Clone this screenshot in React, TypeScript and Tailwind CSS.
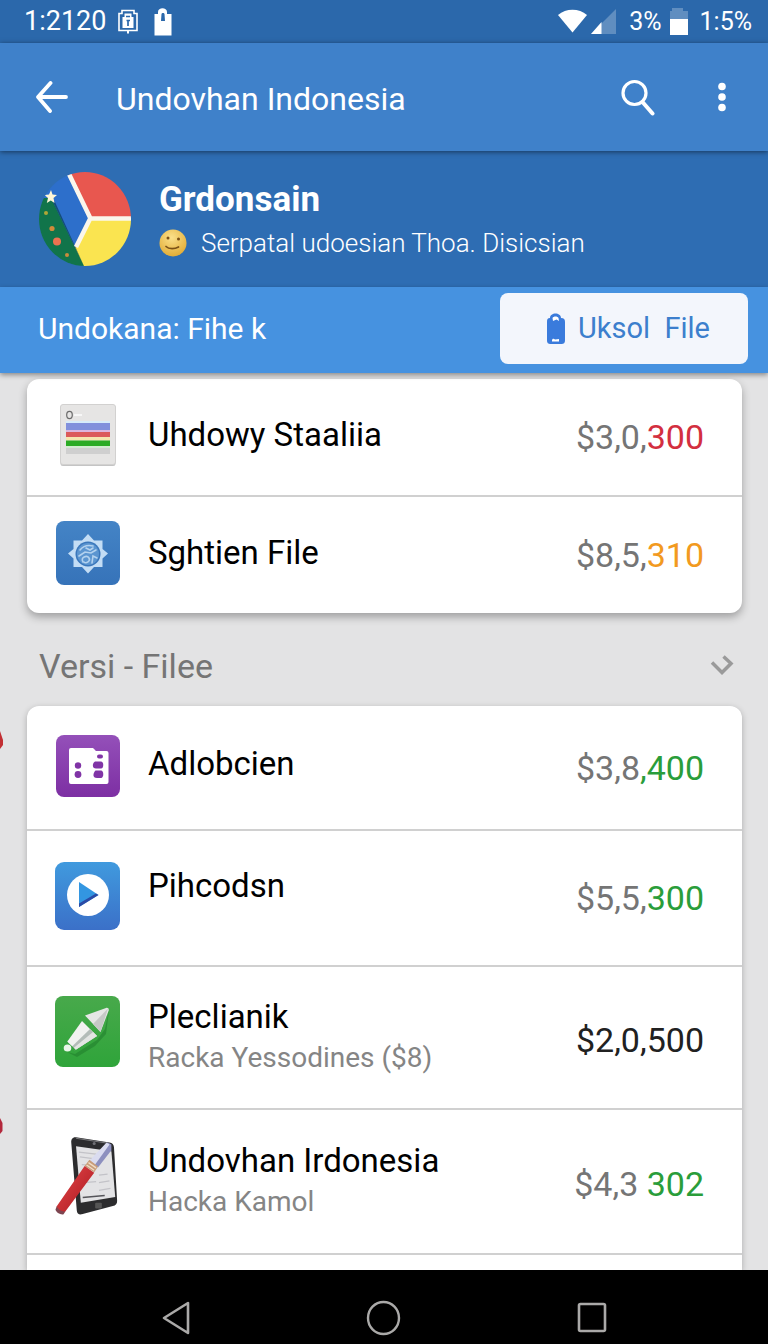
import React from 'react';
import type { ReactNode } from 'react';

type Item = {
  title: string;
  subtitle?: string;
  amount: string;
  change: string;
  tone: string;
  amountTone?: string;
  height: string;
  titleClass?: string;
  icon: ReactNode;
};

function SheetIcon() {
  return (
    <svg width="64" height="64" viewBox="0 0 64 64" aria-hidden="true">
      <rect x="4.5" y="2" width="55" height="61" rx="2.5" fill="#c4c4c4" />
      <rect x="4.5" y="1.5" width="55" height="60" rx="2.5" fill="#e6e5e4" stroke="#d2d1d0" />
      <ellipse cx="13.5" cy="12" rx="2.8" ry="3.6" fill="none" stroke="#6b6b6b" strokeWidth="1.2" />
      <path d="M18 12h8" stroke="#f7f7f7" strokeWidth="2" />
      <rect x="10" y="18" width="44" height="2" fill="#d7ecfa" />
      <rect x="10" y="20" width="44" height="7" fill="#8190dc" />
      <rect x="10" y="27" width="44" height="2" fill="#dcb6dd" />
      <rect x="10" y="29" width="44" height="5" fill="#db5a5a" />
      <rect x="10" y="34" width="44" height="3.5" fill="#f5e6ae" />
      <rect x="10" y="37.5" width="44" height="5.5" fill="#2bab25" />
      <rect x="10" y="43" width="44" height="2" fill="#d3ecd1" />
      <rect x="10" y="45" width="44" height="6" fill="#cfcfcf" />
    </svg>
  );
}

function BadgeIcon() {
  return (
    <svg width="64" height="64" viewBox="0 0 64 64" aria-hidden="true">
      <defs>
        <linearGradient id="badge" x1="0" y1="0" x2="0" y2="1">
          <stop offset="0" stopColor="#4484c6" />
          <stop offset="1" stopColor="#3673b9" />
        </linearGradient>
      </defs>
      <rect width="64" height="64" rx="8" fill="url(#badge)" />
      <path
        d="M32 13l6 6.500h8.500V28l5.500 4.500-5.500 5V46H38l-6 6.500-6-6.500h-8.500v-8.500L12 32.500l5.500-4.500v-8.500H26z"
        fill="#c3ddf5"
      />
      <circle cx="32" cy="33" r="12.5" fill="#3a77bb" />
      <circle cx="32" cy="33" r="11" fill="#5b95d0" />
      <path
        d="M24 29c4-5 9-5 13-4M23 35l6-4 6 1 5-3M27 41c-3-5 4-7 6-4s-3 6-5 4M36 42l1-7 4 2M30 27l4 2 3-2"
        fill="none"
        stroke="#b3d2ef"
        strokeWidth="1.6"
        strokeLinecap="round"
      />
    </svg>
  );
}

function FolderIcon() {
  return (
    <svg width="64" height="62" viewBox="0 0 64 62" aria-hidden="true">
      <defs>
        <linearGradient id="folder" x1="0" y1="0" x2="0" y2="1">
          <stop offset="0" stopColor="#9450b9" />
          <stop offset="1" stopColor="#7d2fa3" />
        </linearGradient>
      </defs>
      <rect width="64" height="62" rx="8" fill="url(#folder)" />
      <path
        d="M15 13h21c1 0 2 .5 2.500 1.500L40 16h10.500a2 2 0 0 1 2 2v29a2 2 0 0 1-2 2H15a2 2 0 0 1-2-2V15a2 2 0 0 1 2-2z"
        fill="#fff"
      />
      <g fill="#8034a6">
        <circle cx="22" cy="30.5" r="3.2" />
        <circle cx="22" cy="39.5" r="3.4" />
        <rect x="41" y="19.5" width="6" height="4" rx="2" />
        <path d="M39 26.500h6c3 0 3 7 0 7h-5c-4 0-4-5-1-7z" />
        <path d="M39.500 35.500h5.500c3 0 3 7.500 0 7.500h-4c-5 0-4-5-1.500-7.500z" />
      </g>
    </svg>
  );
}

function PlayIcon() {
  return (
    <svg width="65" height="68" viewBox="0 0 65 68" aria-hidden="true">
      <defs>
        <linearGradient id="play" x1="0" y1="0" x2="0" y2="1">
          <stop offset="0" stopColor="#409ade" />
          <stop offset="1" stopColor="#3b70c8" />
        </linearGradient>
      </defs>
      <rect width="65" height="68" rx="9" fill="url(#play)" />
      <circle cx="33" cy="33" r="21" fill="#fff" />
      <path d="M24 20v25l19.500-12z" fill="#3396e1" />
      <path d="M24 45v-3.500l17-10 2.500 1.500z" fill="#2b4aa5" />
    </svg>
  );
}

function PenIcon() {
  return (
    <svg width="65" height="71" viewBox="0 0 65 71" aria-hidden="true">
      <defs>
        <linearGradient id="pen" x1="0" y1="0" x2="0" y2="1">
          <stop offset="0" stopColor="#48a94b" />
          <stop offset="1" stopColor="#2fa43a" />
        </linearGradient>
      </defs>
      <rect width="65" height="71" rx="8" fill="url(#pen)" />
      <path d="M12 56l8 2 22-14 8-11 4-19-3 24-11 12-18 11z" fill="#22802d" opacity=".6" />
      <path d="M30 19.500L51 12c2-.5 3 .5 2.700 2.500L45.500 36z" fill="#e6e7e5" />
      <path d="M53 12.500L38 28l7.500 8z" fill="#c6c9c6" />
      <path d="M27 25l15 15-22.500 14.500L12 46z" fill="#f1f2f0" />
      <path d="M35 33l7 7-22.500 14.500-3-3.500z" fill="#b3bcb8" />
      <path d="M38 36l4 4-22.500 14.500-1.500-2z" fill="#e3e5e3" />
      <path d="M10 45l10 9.500" stroke="#36a33f" strokeWidth="2.2" />
      <ellipse cx="12.5" cy="52" rx="3.8" ry="3.5" fill="#e9f5e9" />
    </svg>
  );
}

function TabletIcon() {
  return (
    <svg width="68" height="84" viewBox="0 0 68 84" aria-hidden="true">
      <defs>
        <linearGradient id="barrel" x1="0" y1="0" x2="1" y2="1">
          <stop offset="0" stopColor="#e5484a" />
          <stop offset="1" stopColor="#a9161e" />
        </linearGradient>
      </defs>
      <path
        d="M22 1.500l35 5.500c3 .5 4.500 2 4.700 5L65 68c.2 3-1.500 5-4.500 5.500L28 82c-3 .7-5-1-5.200-4L17 7c-.2-3.500 1.500-6 5-5.500z"
        fill="#2c2c2e"
      />
      <path d="M22 2.500l35 5.500" stroke="#77777a" strokeWidth="1.200" />
      <path d="M22 11l37 5 4 48-36 6z" fill="#e3e3e5" />
      <path d="M25 17l18 2M26 22l16 2M28 30l12 1M46 41l9-1M46 49l11-2M46 57l12-2M30 49l13-1" stroke="#c3c3c8" strokeWidth="1.300" />
      <path d="M29 64.500l23-2" stroke="#55555a" strokeWidth="1.600" />
      <rect x="42" y="70" width="7" height="6" rx="1" fill="#555" />
      <circle cx="41" cy="8" r="1.600" fill="#707075" />
      <path d="M55 7l4 2v6L45 33l-9-6z" fill="#8d90bf" />
      <path d="M54 7l3 2-15 21-6-4z" fill="#dadcf0" />
      <path d="M36 25l9 7-4 6-10-6.500z" fill="#c99d78" />
      <path d="M35 28l8 5.500M33 30.500l8 5.500" stroke="#f0ddc8" strokeWidth="1.400" />
      <path d="M31 31.500l10 7L11 79c-2 3-11-2-9-5.500z" fill="url(#barrel)" />
      <path d="M2 73.500c1 4 6 6.500 9 5.500l-2 3c-3 1-8-2-8.500-5z" fill="#7d4550" />
    </svg>
  );
}

function Avatar() {
  return (
    <svg width="92" height="94" viewBox="0 0 92 94" role="img" aria-label="Grdonsain">
      <defs>
        <clipPath id="disc">
          <ellipse cx="46" cy="47" rx="46" ry="47" />
        </clipPath>
      </defs>
      <g clipPath="url(#disc)">
        <path d="M0 0h52v94H0z" fill="#2d6fcb" />
        <path d="M28 0h64v46H51z" fill="#e8574f" />
        <path d="M51 46h41v48H44l-8-18z" fill="#fae450" />
        <path d="M0 26l12 0 33 68H0z" fill="#11744a" />
        <path d="M13 28l3 2 20 44 9 20z" fill="#0c3f55" opacity=".7" />
        <path d="M30 2l21.500 44.500M92 46.500H51M51.500 46L37 75" stroke="#faf6ec" strokeWidth="4.500" fill="none" />
        <path d="M12 18l1.500 4.500 4.500.5-3.500 3 1 5-3.700-2.500-4 2.500 1.200-5-3.500-3 4.500-.5z" fill="#fff6d6" />
        <circle cx="7" cy="41" r="2" fill="#b0a636" />
        <circle cx="13" cy="56.5" r="2.6" fill="#d08a3a" />
        <circle cx="18" cy="69.5" r="4" fill="#ed7250" />
        <circle cx="28" cy="83" r="2" fill="#c98b3c" />
      </g>
    </svg>
  );
}

const recent: Item[] = [
  { title: 'Uhdowy Staaliia', amount: '$3,0,', change: '300', tone: 'text-[#d32f3f]', height: 'h-[118px]', icon: <SheetIcon /> },
  { title: 'Sghtien File', amount: '$8,5,', change: '310', tone: 'text-[#f29a1f]', height: 'h-[116px]', icon: <BadgeIcon /> },
];

const versions: Item[] = [
  { title: 'Adlobcien', amount: '$3,8', change: ',400', tone: 'text-[#2a9d3a]', height: 'h-[125px]', titleClass: 'pb-2', icon: <FolderIcon /> },
  { title: 'Pihcodsn', amount: '$5,5,', change: '300', tone: 'text-[#2a9d3a]', height: 'h-[136px]', titleClass: 'pb-6', icon: <PlayIcon /> },
  {
    title: 'Pleclianik',
    subtitle: 'Racka Yessodines ($8)',
    amount: '$2,0,',
    change: '500',
    tone: 'text-[#212121]',
    amountTone: 'text-[#212121]',
    height: 'h-[143px]',
    icon: <PenIcon />,
  },
  {
    title: 'Undovhan Irdonesia',
    subtitle: 'Hacka Kamol',
    amount: '$4,3 ',
    change: '302',
    tone: 'text-[#2a9d3a]',
    height: 'h-[145px]',
    icon: <TabletIcon />,
  },
];

function Row({ item }: { item: Item }) {
  return (
    <li className={`flex items-center border-b-2 border-[#d0d0d0] pl-7 pr-[38px] last:border-b-0 ${item.height}`}>
      <div className={`mr-7 flex w-[65px] shrink-0 justify-center ${item.subtitle ? 'pb-3' : 'pb-1'}`}>{item.icon}</div>
      <div className={`min-w-0 flex-1 ${item.titleClass ?? 'pb-1'}`}>
        <h3 className="text-[33px] leading-[44px] text-black">{item.title}</h3>
        {item.subtitle && <p className="text-[28px] leading-[38px] text-[#858585]">{item.subtitle}</p>}
      </div>
      <p className={`whitespace-pre text-[34px] leading-[44px] ${item.subtitle ? 'pt-1' : ''} ${item.amountTone ?? 'text-[#757575]'}`}>
        {item.amount}
        <span className={item.tone}>{item.change}</span>
      </p>
    </li>
  );
}

function StatusBar() {
  return (
    <div className="flex h-[43px] items-center justify-between bg-[#2b68ab] pl-6 pr-4 text-[25px] text-white">
      <div className="flex items-center gap-3">
        <span className="text-[27px]">1:2120</span>
        <svg width="20" height="25" viewBox="0 0 20 25" aria-hidden="true">
          <path d="M4 1.500h12v3h3v17H1v-17h3z" fill="none" stroke="#fff" strokeWidth="1.600" />
          <path d="M4.500 8h2V4.500h7V8h2v11h-11z" fill="#fff" />
          <path d="M8 7.500h4M8.500 11.500h3.500M10 11v6" stroke="#2b68ab" strokeWidth="1.700" />
          <path d="M10 21v3.500" stroke="#fff" strokeWidth="2" />
        </svg>
        <svg width="26" height="28" viewBox="0 0 26 28" aria-hidden="true">
          <path d="M5 6h3V4c0-5 9-5 9 0v2h4.500v21.500H4.500V6z" fill="#fff" />
          <path d="M11.500 6c0-1.500 3-1.500 3 0l.5 7h-4z" fill="#2b68ab" />
        </svg>
      </div>
      <div className="flex items-center gap-2">
        <svg width="60" height="26" viewBox="0 0 60 26" aria-hidden="true">
          <path d="M1 6C9-1 22-1 30 6L15.500 23.500z" fill="#fff" />
          <path d="M59 0v25H34z" fill="#fff" opacity=".25" />
          <path d="M44.500 13v12H34z" fill="#fff" />
        </svg>
        <span className="pl-1">3%</span>
        <svg width="18" height="27" viewBox="0 0 18 27" aria-hidden="true">
          <path d="M0 3h2V0h11v3h5v24H0z" fill="#fff" opacity=".25" />
          <path d="M0 11h18v16H0z" fill="#fff" />
        </svg>
        <span className="pl-1">1:5%</span>
      </div>
    </div>
  );
}

export default function App() {
  return (
    <div className="flex min-h-screen flex-col bg-[#e3e3e4] font-[Roboto,sans-serif]">
      <StatusBar />

      <header className="relative z-20 flex h-[108px] items-center bg-[#3f81ca] pl-9 pr-7 text-white shadow-[0_1px_5px_rgba(0,0,0,0.5)]">
        <button type="button" aria-label="Back">
          <svg width="32" height="32" viewBox="0 0 32 32" fill="none" stroke="currentColor" strokeWidth="3.800" strokeLinecap="round" strokeLinejoin="round">
            <path d="M14.500 2L2 16l12 14M2.500 16H30" />
          </svg>
        </button>
        <h1 className="flex-1 pl-12 pt-1 text-[32px] leading-[44px]">Undovhan Indonesia</h1>
        <button type="button" aria-label="Search" className="mr-12">
          <svg width="36" height="38" viewBox="0 0 36 38" fill="none" stroke="currentColor" strokeLinecap="round">
            <circle cx="14.5" cy="15" r="11.5" strokeWidth="3.200" />
            <path d="M22.500 24l10 11.500" strokeWidth="4" />
          </svg>
        </button>
        <button type="button" aria-label="More options">
          <svg width="36" height="30" viewBox="0 0 36 30" fill="currentColor">
            <circle cx="18" cy="4.5" r="3.8" />
            <circle cx="18" cy="15" r="3.8" />
            <circle cx="18" cy="25.5" r="3.8" />
          </svg>
        </button>
      </header>

      <section className="flex h-[136px] items-center gap-7 bg-[#2e6db3] pl-[39px] text-white">
        <Avatar />
        <div>
          <h2 className="text-[35px] leading-[48px] font-bold">Grdonsain</h2>
          <p className="flex items-center gap-[14px] text-[26px] leading-[38px] font-light">
            <svg width="28" height="28" viewBox="0 0 28 28" aria-hidden="true">
              <defs>
                <radialGradient id="face" cx=".45" cy=".3" r=".8">
                  <stop offset="0" stopColor="#fbe08a" />
                  <stop offset="1" stopColor="#dfa62c" />
                </radialGradient>
              </defs>
              <circle cx="14" cy="14" r="13.5" fill="url(#face)" />
              <circle cx="9" cy="9" r="1.5" fill="#7b5117" />
              <circle cx="19.5" cy="10" r="1.5" fill="#7b5117" />
              <path d="M7 17.500c3 3 9 2.500 12.500.5" fill="none" stroke="#7b5117" strokeWidth="1.700" strokeLinecap="round" />
            </svg>
            Serpatal udoesian Thoa. Disicsian
          </p>
        </div>
      </section>

      <section className="relative z-10 flex h-[86px] items-center justify-between bg-[#4692e0] pb-[3px] pl-[38px] pr-5 text-white shadow-[0_2px_5px_rgba(0,0,0,0.4)]">
        <p className="text-[30px] leading-[44px]">Undokana: Fihe k</p>
        <button type="button" className="flex h-[71px] w-[248px] items-center justify-center gap-3 rounded-lg bg-[#f3f6fc] pl-2 text-[29px] text-[#3c7fcd]">
          <svg width="20" height="32" viewBox="0 0 20 32" aria-hidden="true">
            <path d="M4 5c0-6 11-6 11 0 3 0 4 1.500 4 4v18c0 3-1 4-4 4H5c-3 0-4-1-4-4V9c0-2.500.5-4 3-4z" fill="#3a7bdc" />
            <path d="M6.500 5c1-2 5-2 6 0l.5 3-2.500-1.500L7 8z" fill="#fff" />
            <path d="M6 27.500c0-2 2-2 3-1l4-.5v2.500H6z" fill="#fff" />
          </svg>
          <span className="whitespace-pre">Uksol  File</span>
        </button>
      </section>

      <main className="relative flex flex-1 flex-col pl-[27px] pr-[26px] pt-[6px]">
        <ul className="rounded-xl bg-white shadow-[0_4px_8px_rgba(0,0,0,0.3)]">
          {recent.map((item) => (
            <Row key={item.title} item={item} />
          ))}
        </ul>

        <div className="flex h-[93px] items-center justify-between pl-3 pr-2 pt-3">
          <h2 className="text-[34px] leading-[44px] text-[#757575]">Versi - Filee</h2>
          <button type="button" aria-label="Collapse section">
            <svg width="24" height="22" viewBox="0 0 24 22" fill="none" stroke="#9a9a9a" strokeWidth="3.500">
              <path d="M2 7.500l10 10 9-9-7.500-7" />
            </svg>
          </button>
        </div>

        <ul className="flex-1 rounded-t-xl bg-white shadow-[0_2px_6px_rgba(0,0,0,0.25)]">
          {versions.map((item) => (
            <Row key={item.title} item={item} />
          ))}
          <li className="h-[15px]" aria-hidden="true" />
        </ul>

        <svg className="absolute left-0 top-[358px]" width="4" height="20" viewBox="0 0 4 20" aria-hidden="true">
          <path d="M0 0l3 9v5l-3 4z" fill="#c22f33" />
        </svg>
        <svg className="absolute left-0 top-[744px]" width="4" height="20" viewBox="0 0 4 20" aria-hidden="true">
          <path d="M0 1l2.500 5v8L0 17z" fill="#b3283c" />
        </svg>
      </main>

      <nav className="relative z-10 flex h-[74px] items-center bg-black px-[72px] pt-[21px]">
        <div className="grid flex-1 grid-cols-3 justify-items-center">
          <button type="button" aria-label="Back">
            <svg width="32" height="36" viewBox="0 0 32 36" fill="none" stroke="#aaa9a8" strokeWidth="2.600" strokeLinejoin="round">
              <path d="M28 3v30L4 18z" />
            </svg>
          </button>
          <button type="button" aria-label="Home">
            <svg width="36" height="36" viewBox="0 0 36 36" fill="none" stroke="#aaa9a8" strokeWidth="2.400">
              <ellipse cx="17.5" cy="18" rx="15.5" ry="16" />
            </svg>
          </button>
          <button type="button" aria-label="Recent apps">
            <svg width="32" height="36" viewBox="0 0 32 36" fill="none" stroke="#aaa9a8" strokeWidth="2.600">
              <rect x="3" y="4" width="26" height="27" rx="1.5" />
            </svg>
          </button>
        </div>
      </nav>
    </div>
  );
}
